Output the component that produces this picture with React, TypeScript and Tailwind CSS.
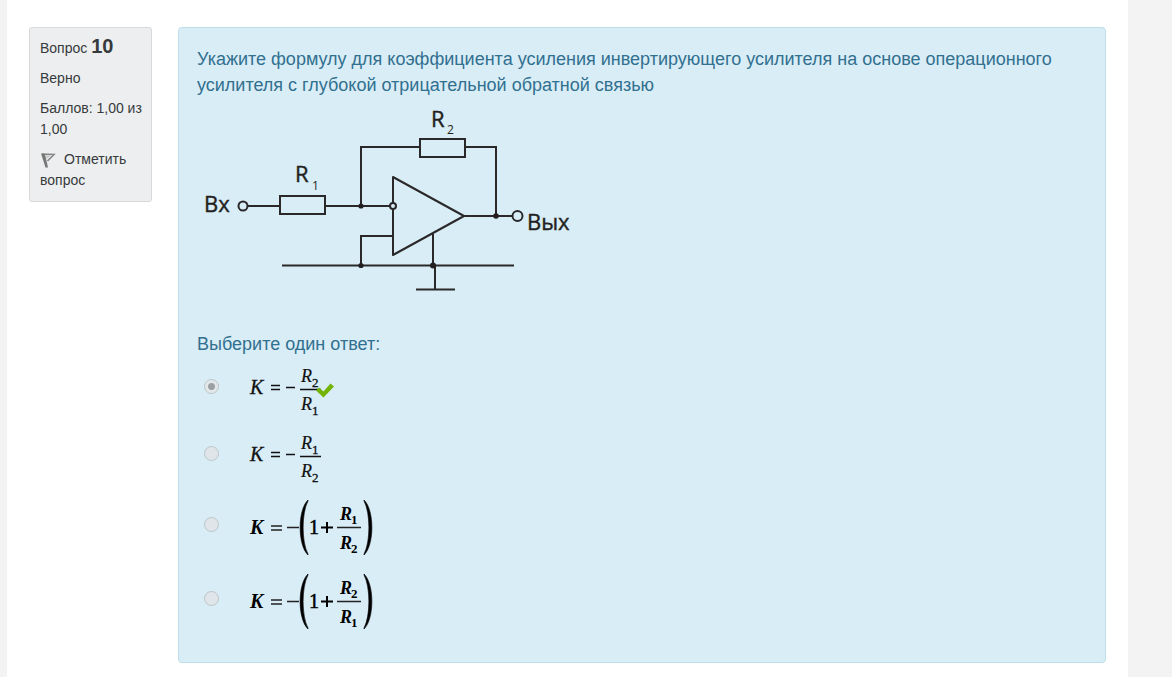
import React from "react";

function Circuit() {
  return (
    <svg
      role="img"
      aria-label="Схема инвертирующего усилителя"
      width="400"
      height="213"
      viewBox="0 0 400 213"
      className="mb-5 block max-w-full"
      fill="none"
      stroke="#2a2829"
      strokeWidth="2"
    >
      <circle cx="46" cy="108" r="4.5" />
      <path d="M51 108H83M128 108H193M164 108V49H223M268 49H299V118M267 118H315" />
      <rect x="83" y="98" width="45" height="18" />
      <rect x="223" y="41" width="45" height="18" />
      <path d="M196 79L267 118L196 157Z" strokeLinejoin="round" />
      <circle cx="196" cy="108" r="3" fill="#d9edf7" />
      <path d="M196 138H164V167M85 167.5H317M236 136V167M238 167V191M219 191.5H258" />
      <circle cx="320.5" cy="118" r="5" />
      <g fill="#231f20" stroke="none">
        <circle cx="164" cy="108" r="2.6" />
        <circle cx="299" cy="118" r="2.8" />
        <circle cx="164" cy="167.5" r="2.6" />
        <circle cx="236" cy="167.5" r="3" />
      </g>
      <g fill="#231f20" stroke="#231f20" strokeWidth="0.4" className="font-['Open_Sans','Noto_Sans',sans-serif]">
        <text x="7" y="114" fontSize="22">Вх</text>
        <text x="330" y="132" fontSize="22">Вых</text>
        <text x="98" y="84" fontSize="22">R</text>
        <text x="115" y="92" fontSize="12" strokeWidth="0">1</text>
        <text x="234" y="29" fontSize="22">R</text>
        <text x="250" y="36" fontSize="12" strokeWidth="0">2</text>
      </g>
    </svg>
  );
}

type FractionProps = { top: string; bottom: string };

function Ratio({ top, bottom, correct }: FractionProps & { correct?: boolean }) {
  return (
    <svg
      role="img"
      aria-label={`K = −R${top}/R${bottom}`}
      width="130"
      height="67"
      viewBox="0 0 130 67"
      className="font-['Liberation_Serif',serif]"
      fill="#111"
    >
      <text x="1" y="37" fontSize="20" fontStyle="italic" stroke="#111" strokeWidth="0.3">K</text>
      <path d="M22 28.5H31M22 32.5H31M37 30.5H46M51 32.5H72" stroke="#111" strokeWidth="1.5" />
      <text x="52" y="25" fontSize="18" fontStyle="italic" stroke="#111" strokeWidth="0.2">R</text>
      <text x="63" y="30" fontSize="13" stroke="#111" strokeWidth="0.3">{top}</text>
      <text x="52" y="53" fontSize="18" fontStyle="italic" stroke="#111" strokeWidth="0.2">R</text>
      <text x="63" y="58" fontSize="13" stroke="#111" strokeWidth="0.3">{bottom}</text>
      {correct && <path d="M67 33.5L70 30.5L74.5 34.5L81.500 26.5L85 29.5L74.5 40.5Z" fill="#73b304" />}
    </svg>
  );
}

function SumRatio({ top, bottom }: FractionProps) {
  return (
    <svg
      role="img"
      aria-label={`K = −(1 + R${top}/R${bottom})`}
      width="130"
      height="74"
      viewBox="0 0 130 74"
      className="font-['Liberation_Serif',serif]"
      fill="#000"
    >
      <text x="1" y="43" fontSize="20" fontStyle="italic" fontWeight="bold">K</text>
      <path d="M22 35H33M22 39H33M38 36.5H50M88 36.5H112" stroke="#222" strokeWidth="1.3" />
      <path d="M72 36.5H84M78 31V42" stroke="#000" strokeWidth="2" />
      <path d="M59 9C48.5 19 48.5 54 59 64L59 63C52.5 51 52.5 22 59 10Z" stroke="#000" strokeWidth="0.6" />
      <path d="M115 9C125.5 19 125.5 54 115 64L115 63C121.5 51 121.5 22 115 10Z" stroke="#000" strokeWidth="0.6" />
      <text x="60" y="43" fontSize="20" stroke="#000" strokeWidth="0.5">1</text>
      <text x="91" y="29" fontSize="18" fontStyle="italic" fontWeight="bold">R</text>
      <text x="102" y="33" fontSize="13" fontWeight="bold">{top}</text>
      <text x="91" y="58" fontSize="18" fontStyle="italic" fontWeight="bold">R</text>
      <text x="102" y="62" fontSize="13" fontWeight="bold">{bottom}</text>
    </svg>
  );
}

function Option({ id, checked, children }: { id: string; checked?: boolean; children: React.ReactNode }) {
  return (
    <div className="flex items-center gap-[30px] pl-[7px]">
      <input
        id={id}
        type="radio"
        name="answer"
        defaultChecked={checked}
        disabled
        className="mb-2 size-[15px] shrink-0 appearance-none rounded-full border border-[#bcc5c9] bg-[#dfe5e8] checked:bg-[radial-gradient(circle,#9c9fa1_3px,#e2e7e9_4px)]"
      />
      <label htmlFor={id}>{children}</label>
    </div>
  );
}

export default function App() {
  return (
    <div className="min-h-screen bg-[#f3f3f3] pr-[44px] pl-[7px] font-['Liberation_Sans',Arial,sans-serif]">
      <main className="flex min-h-screen items-start gap-[26px] bg-white px-[22px] pt-[27px] pb-[14px]">
        <aside className="flex w-[123px] shrink-0 flex-col gap-[9px] rounded-[3px] border border-[#d7d9db] bg-[#eceeef] p-[10px] text-[14px] leading-[21px] text-[#373a3c]">
          <h3>
            Вопрос <span className="text-[20px] leading-[0] font-bold">10</span>
          </h3>
          <div>Верно</div>
          <div className="whitespace-nowrap">Баллов: 1,00 из<br />1,00</div>
          <a href="#flag">
            <svg className="mr-2 inline-block align-[-4px]" width="16" height="16" viewBox="0 0 16 16" fill="none" aria-hidden="true">
              <path d="M2 2L14 2.5L7.500 9" stroke="#888" strokeWidth="1.6" />
              <path d="M1 1.500L5.500 15.500H8L5 2Z" fill="#777" />
              <path d="M5 3L11 3.500L7 7Z" fill="#ccc" />
            </svg>
            Отметить вопрос
          </a>
        </aside>
        <section className="min-w-0 flex-1 rounded-[4px] border border-[#bcdfea] bg-[#d9edf7] px-[18px] pt-[18px] pb-[23px] text-[18px] leading-[26px] text-[#31708f]">
          <p className="max-w-[860px]">
            Укажите формулу для коэффициента усиления инвертирующего усилителя на основе операционного усилителя с глубокой отрицательной обратной связью
          </p>
          <Circuit />
          <fieldset>
            <legend>Выберите один ответ:</legend>
            <Option id="answer-1" checked><Ratio top="2" bottom="1" correct /></Option>
            <Option id="answer-2"><Ratio top="1" bottom="2" /></Option>
            <Option id="answer-3"><SumRatio top="1" bottom="2" /></Option>
            <Option id="answer-4"><SumRatio top="2" bottom="1" /></Option>
          </fieldset>
        </section>
      </main>
    </div>
  );
}
